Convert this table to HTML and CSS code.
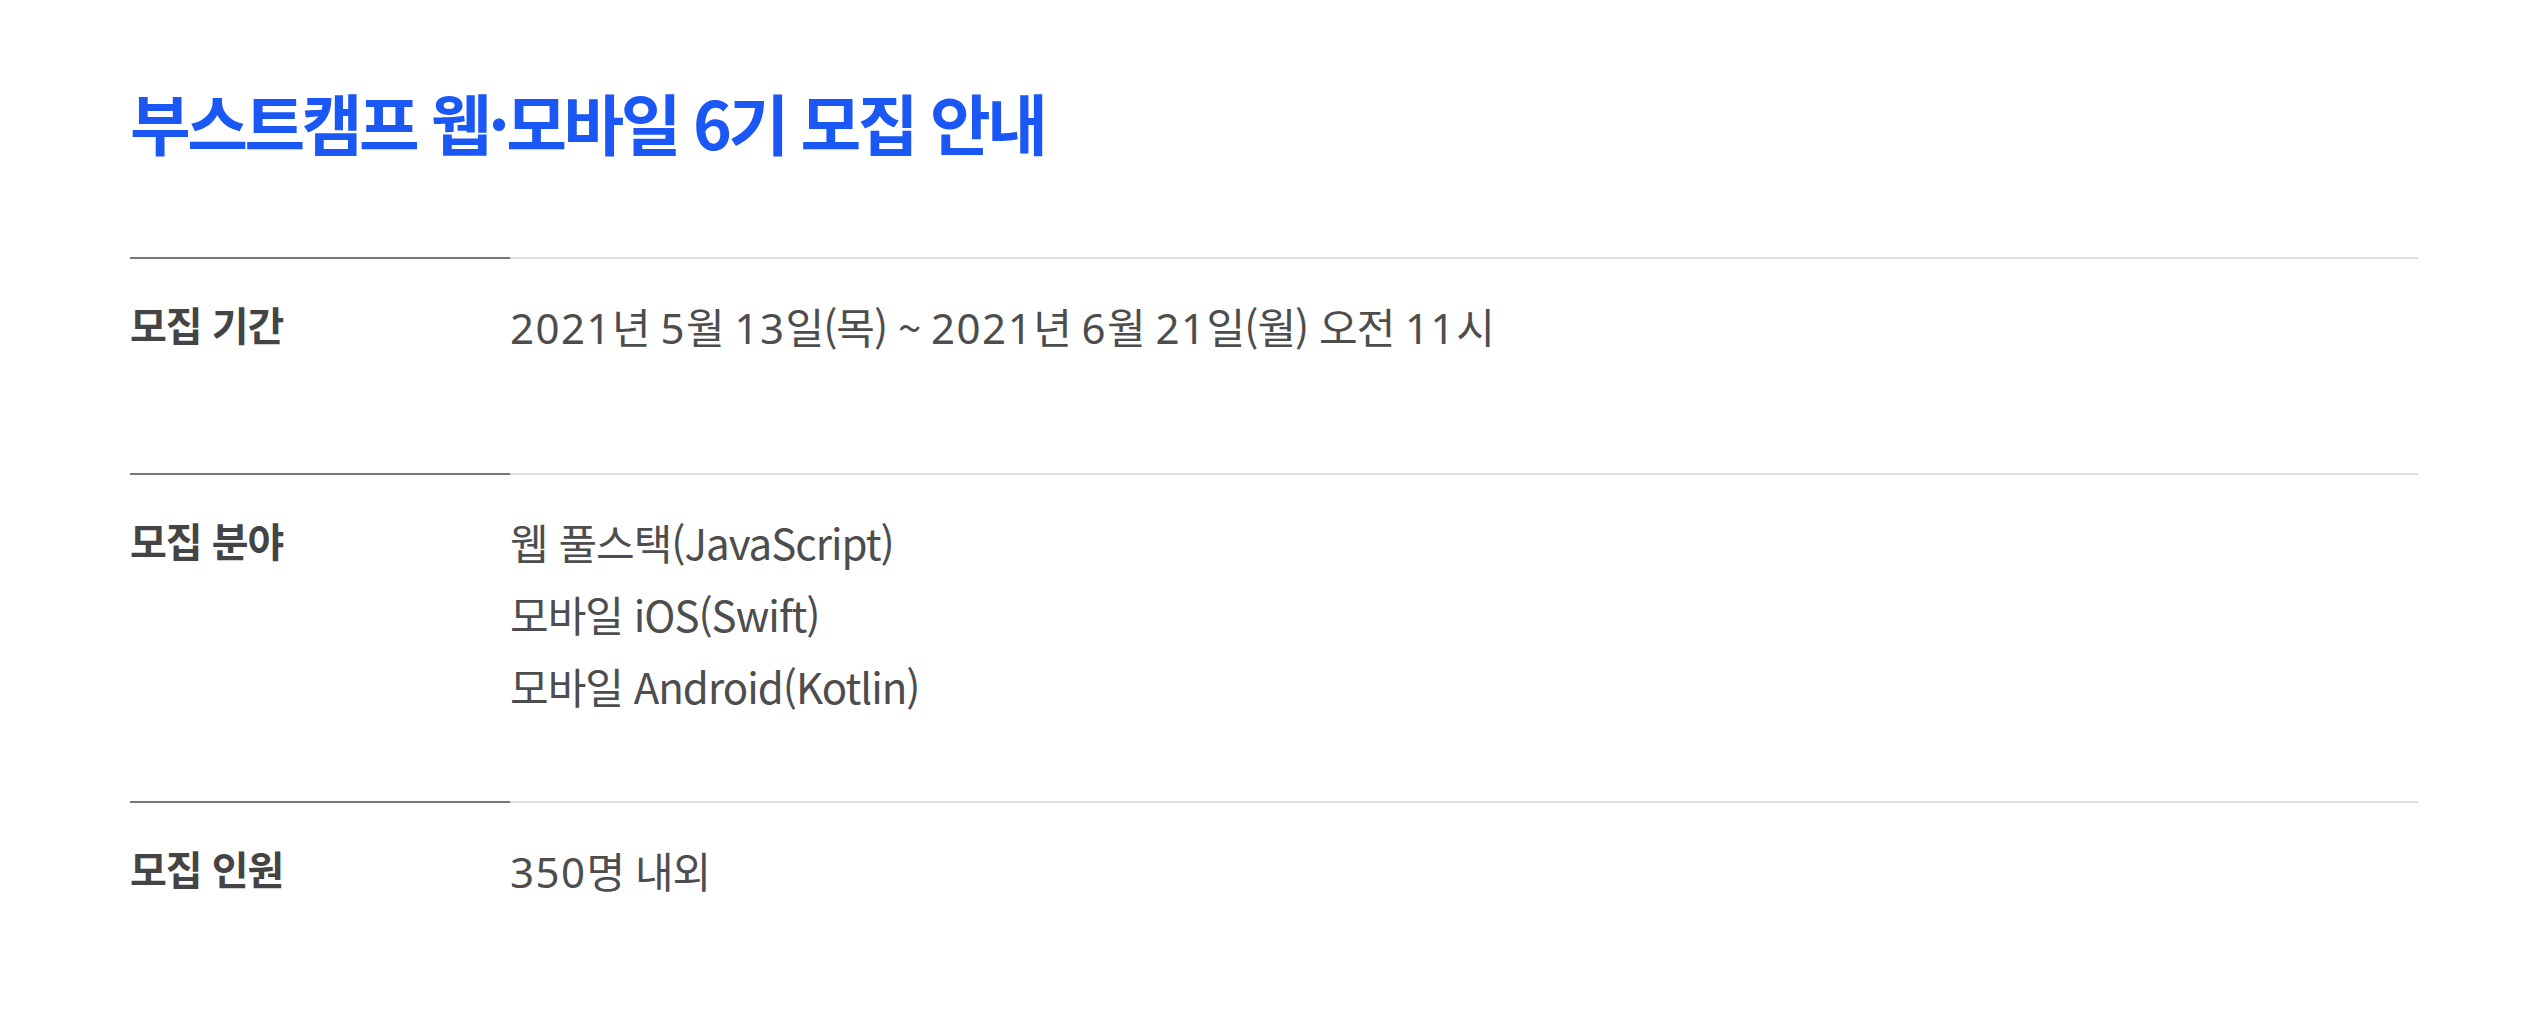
FILE: index.html
```html
<!DOCTYPE html>
<html lang="ko">
<head>
    <meta charset="UTF-8">
    <meta name="viewport" content="width=device-width, initial-scale=1.0">
    <title>부스트캠프 웹·모바일 6기 모집 안내</title>
    <link rel="stylesheet" href="styles.css">
</head>
<body>
    <section class="recruit">
        <h1 class="recruit-title">부스트캠프 웹·모바일 6기 모집 안내</h1>

        <dl class="info-list">
            <div class="info-row">
                <dt>모집 기간</dt>
                <dd><span class="num">2021</span>년 <span class="num">5</span>월 <span class="num">13</span>일(목) ~ <span class="num">2021</span>년 <span class="num">6</span>월 <span class="num">21</span>일(월) 오전 <span class="num">11</span>시</dd>
            </div>
            <div class="info-row">
                <dt>모집 분야</dt>
                <dd>
                    <p>웹 풀스택(JavaScript)</p>
                    <p>모바일 iOS(Swift)</p>
                    <p>모바일 Android(Kotlin)</p>
                </dd>
            </div>
            <div class="info-row">
                <dt>모집 인원</dt>
                <dd><span class="num">350</span>명 내외</dd>
            </div>
        </dl>
    </section>
</body>
</html>
```

FILE: styles.css
```css
body {
    margin: 0;
    font-family: "Noto Sans CJK KR", "Noto Sans", sans-serif;
    background-color: #fff;
    color: #4d4d4d;
}
.recruit {
    padding: 79px 126px 0 130px;
}
.recruit-title {
    margin: 0 0 94px;
    font-size: 66px;
    font-weight: 700;
    line-height: 84px;
    letter-spacing: -3.5px;
    color: #1a57f5;
}
.info-list {
    margin: 0;
}
.info-row {
    display: grid;
    grid-template-columns: 380px 1fr;
}
.info-row dt,
.info-row dd {
    margin: 0;
    padding: 34px 0 76px;
    min-height: 104px;
}
.info-row dt {
    border-top: 2px solid #767676;
    font-size: 40px;
    font-weight: 700;
    line-height: 62px;
    letter-spacing: -1px;
    color: #444;
}
.info-row dd {
    padding-top: 31px;
    padding-bottom: 79px;
    border-top: 2px solid #dcdcdc;
    font-size: 42px;
    line-height: 72px;
    letter-spacing: -1px;
}
.info-row dd p {
    margin: 0;
}
.num {
    font-family: "Noto Sans", sans-serif;
    letter-spacing: 1.5px;
}
```
